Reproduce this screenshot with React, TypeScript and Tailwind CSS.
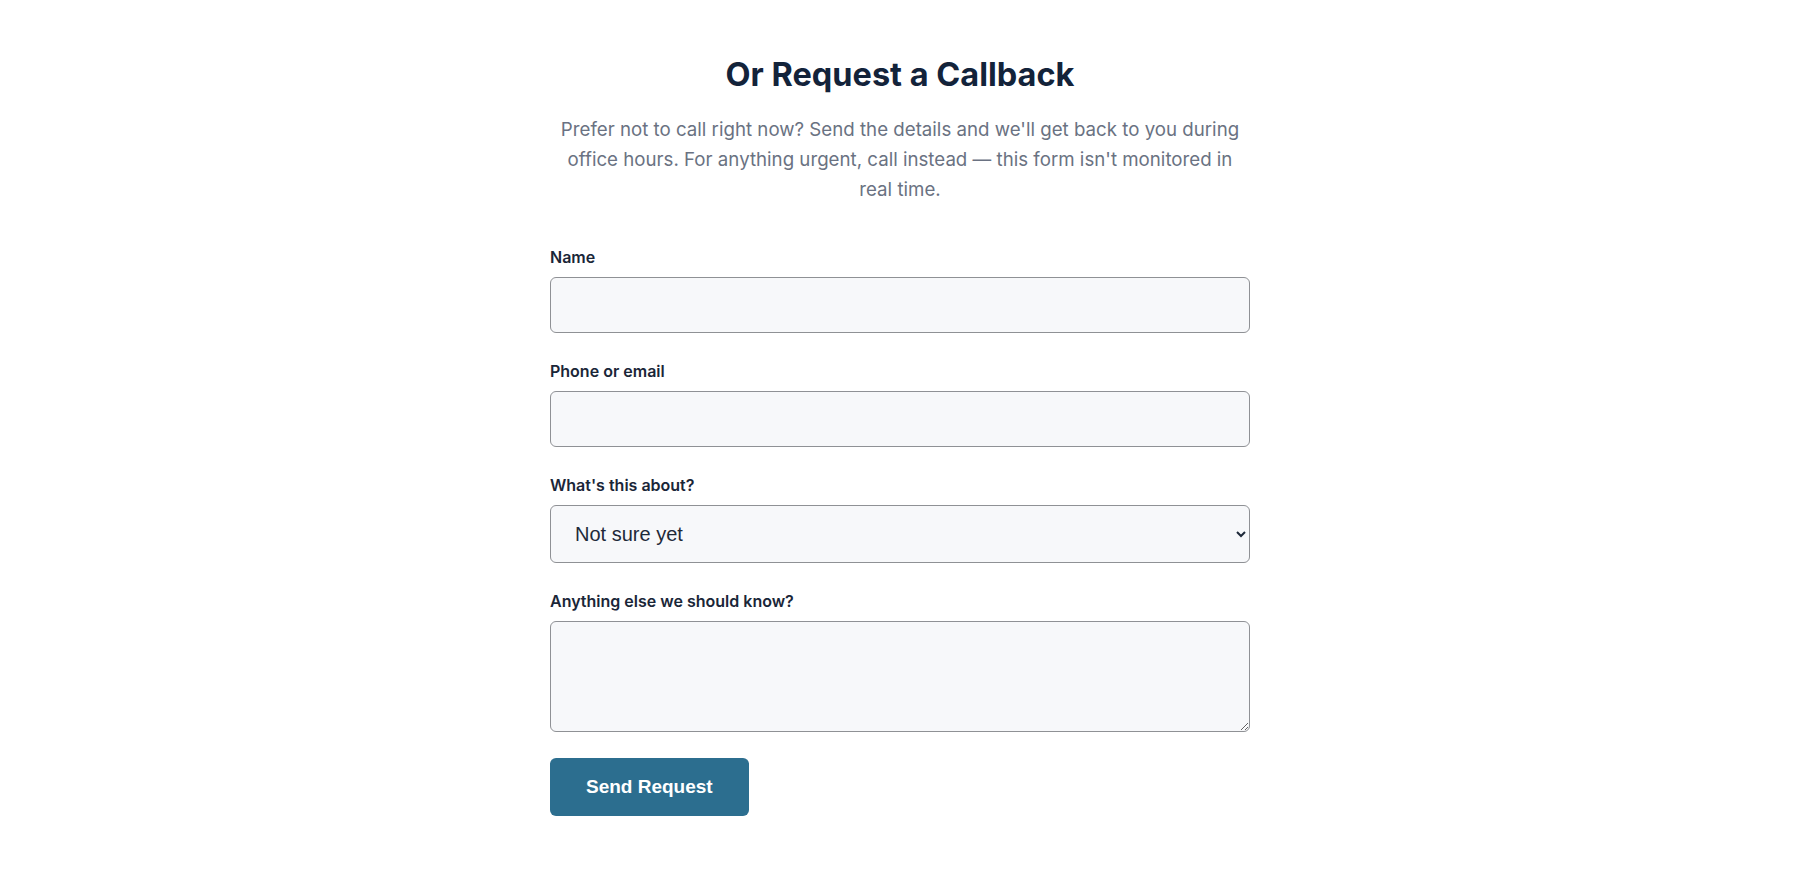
import { useState } from 'react';

const fieldClass =
  'w-full rounded-md border border-[#8f9195] bg-[#f7f8fa] px-5 text-lg text-gray-800 outline-none focus:border-[#2c6e8f]';

function Field({ label, children }: { label: string; children: React.ReactNode }) {
  return (
    <div className="flex flex-col">
      <label className="mb-2.5 text-base font-semibold leading-5 text-[#1a2638]">{label}</label>
      {children}
    </div>
  );
}

export default function App() {
  const [topic, setTopic] = useState('Not sure yet');

  return (
    <div className="min-h-screen bg-white font-['Inter',sans-serif]">
      <section className="mx-auto max-w-[700px] pt-[57px] pb-16">
        <h2 className="text-center text-[32.5px] font-bold leading-9 text-[#13233a]">
          Or Request a Callback
        </h2>
        <p className="mt-[22px] text-center text-[18.7px] leading-[1.6] text-gray-500">
          Prefer not to call right now? Send the details and we'll get back to you during office
          hours. For anything urgent, call instead — this form isn't monitored in real time.
        </p>

        <form className="mt-[42px] flex flex-col gap-7" onSubmit={(e) => e.preventDefault()}>
          <Field label="Name">
            <input type="text" className={`${fieldClass} h-[56px]`} />
          </Field>
          <Field label="Phone or email">
            <input type="text" className={`${fieldClass} h-[56px]`} />
          </Field>
          <Field label="What's this about?">
            <select
              value={topic}
              onChange={(e) => setTopic(e.target.value)}
              className={`${fieldClass} h-[58px] font-['Liberation_Sans',sans-serif] text-[20px] text-[#222]`}
            >
              <option>Not sure yet</option>
              <option>Appointment</option>
              <option>Billing</option>
              <option>Something else</option>
            </select>
          </Field>
          <Field label="Anything else we should know?">
            <textarea className={`${fieldClass} h-[111px] py-3`} />
          </Field>
          <div className="-mt-[2px]">
            <button
              type="submit"
              className="h-[58px] rounded-md bg-[#2c6e8f] px-[36px] font-['Liberation_Sans',sans-serif] text-[19px] font-bold text-white hover:bg-[#245c78]"
            >
              Send Request
            </button>
          </div>
        </form>
      </section>
    </div>
  );
}
